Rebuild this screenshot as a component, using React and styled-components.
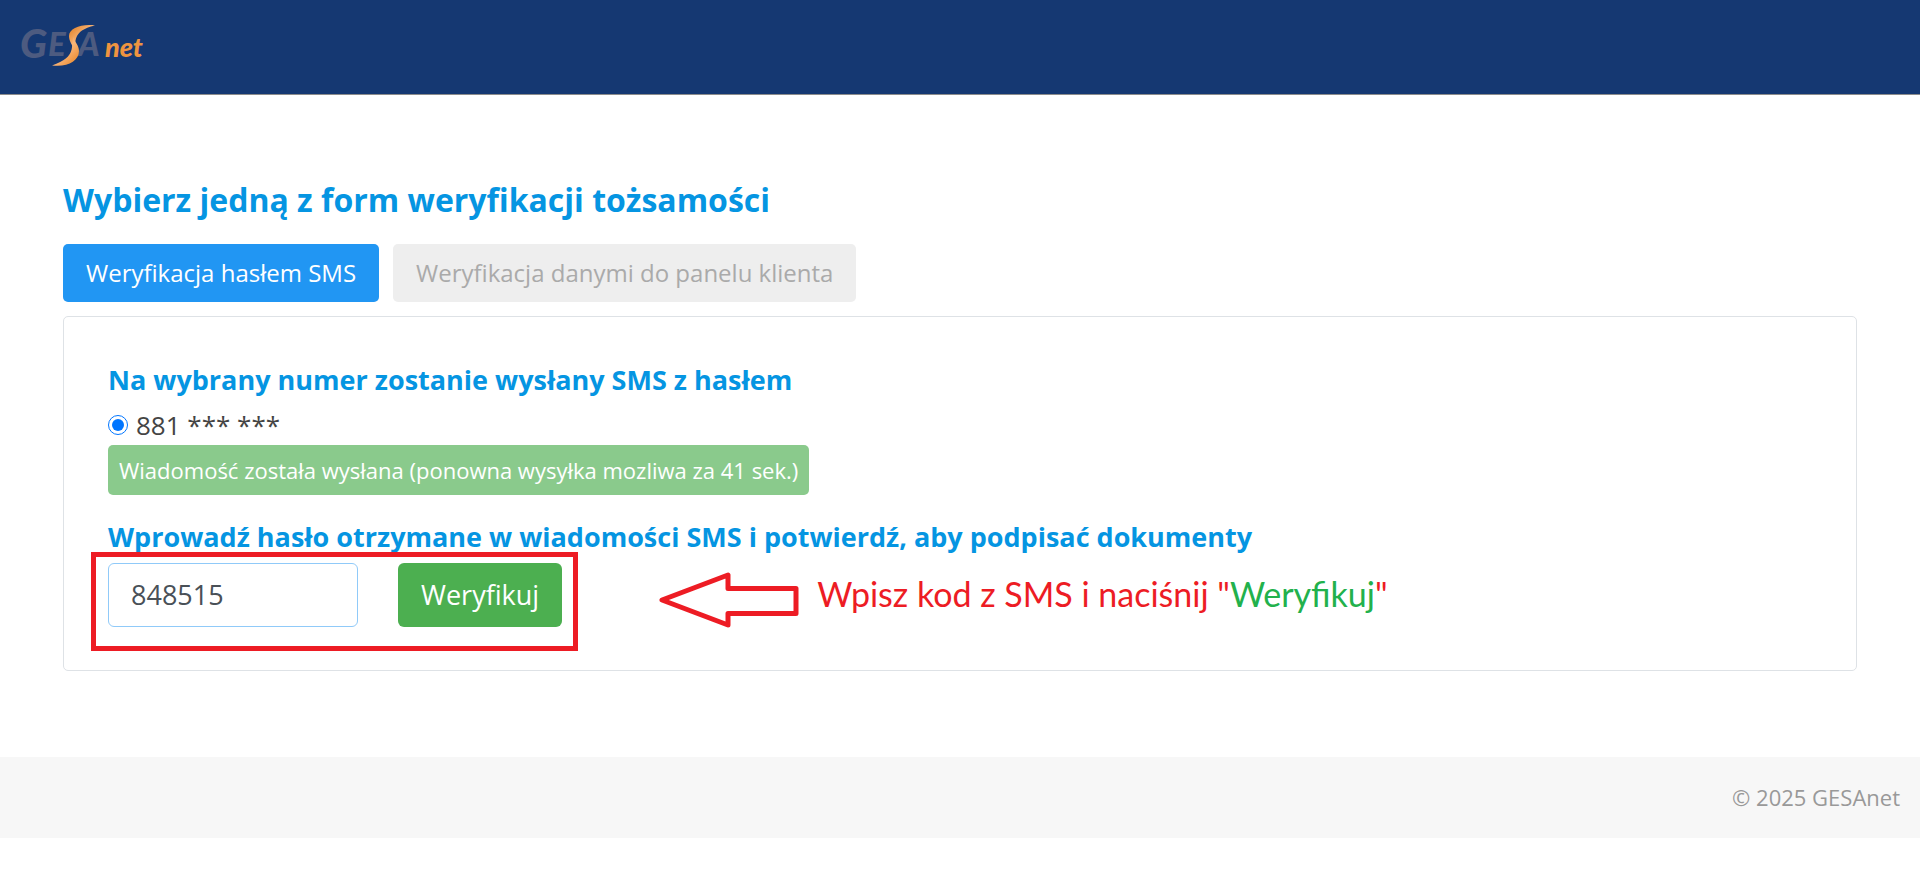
import React, { useState } from "react";
import styled, { createGlobalStyle } from "styled-components";

const GlobalStyle = createGlobalStyle`
    * {
        box-sizing: border-box;
    }
    body {
        margin: 0;
        background: #fff;
        color: #444;
        font-family: "Open Sans", "Noto Sans", sans-serif;
    }
    button, input {
        font-family: inherit;
    }
`
const Header = styled.header`
    display: flex;
    padding: 12px 16px;
    background: #153872;
    border-bottom: 1px solid #8c8c8c;
`
const LogoLink = styled.a`
    display: flex;
`
const Main = styled.main`
    padding: 81px 63px 86px;
`
const Title = styled.h1`
    margin: 0 0 20px;
    font-size: 32px;
    line-height: 48px;
    font-weight: 700;
    color: #0595e2;
`
const Tabs = styled.div`
    display: flex;
    gap: 14px;
    margin-bottom: 14px;
`
const Tab = styled.button`
    padding: 12px 23px;
    border: 0;
    border-radius: 5px;
    font-size: 24px;
    line-height: 34px;
    cursor: pointer;
    background: ${(props) => (props.$active ? "#2196f3" : "#eee")};
    color: ${(props) => (props.$active ? "#fff" : "#aaa")};
`
const Panel = styled.section`
    padding: 43px 44px;
    border: 1px solid #dee2e6;
    border-radius: 5px;
`
const SubTitle = styled.h2`
    margin: 0;
    font-size: 27px;
    line-height: 40px;
    font-weight: 700;
    color: #0595e2;
`
const PhoneOption = styled.label`
    display: flex;
    align-items: center;
    gap: 8px;
    margin-top: 5px;
    font-size: 26px;
    line-height: 40px;
    input {
        width: 20px;
        height: 20px;
        margin: 0;
        accent-color: #0075ff;
    }
`
const SentButton = styled.button`
    display: block;
    margin-bottom: 22px;
    padding: 8px 11px;
    border: 0;
    border-radius: 5px;
    font-size: 22px;
    line-height: 34px;
    background: #4caf50;
    color: #fff;
    opacity: 0.65;
`
const CodeRow = styled.form`
    display: flex;
    align-items: center;
    gap: 97px;
    margin-top: 6px;
`
const CodeFields = styled.div`
    position: relative;
    display: flex;
    gap: 40px;
`
const CodeInput = styled.input`
    width: 250px;
    height: 64px;
    padding: 0 22px 2px;
    border: 1px solid #90caf9;
    border-radius: 6px;
    font-size: 27px;
    color: #495057;
    outline: none;
`
const VerifyButton = styled.button`
    height: 64px;
    padding: 0 23px 2px;
    border: 0;
    border-radius: 6px;
    font-size: 27px;
    background: #4caf50;
    color: #fff;
    cursor: pointer;
`
const Highlight = styled.div`
    position: absolute;
    top: -11px;
    right: -16px;
    bottom: -24px;
    left: -17px;
    border: 5px solid #ed1c24;
    pointer-events: none;
`
const Hint = styled.div`
    display: flex;
    align-items: center;
    gap: 18px;
    height: 64px;
`
const HintText = styled.p`
    margin: 0;
    padding-bottom: 2px;
    font-family: Lato, "Open Sans", sans-serif;
    font-size: 34px;
    line-height: 40px;
    color: #ed1c24;
    span {
        color: #22b14c;
    }
`
const Footer = styled.footer`
    padding: 24px 20px;
    background: #f7f7f7;
    font-size: 22px;
    line-height: 33px;
    text-align: right;
    color: #999;
`

const Logo = () => (
    <svg width="134" height="70" viewBox="16 12 134 70" role="img" aria-label="GESAnet">
        <defs>
            <linearGradient id="blade" x1="0" x2="1" y1="0" y2="1">
                <stop offset="0" stopColor="#e07b1c" />
                <stop offset="0.5" stopColor="#f9b67a" />
                <stop offset="1" stopColor="#e8801c" />
            </linearGradient>
        </defs>
        <g fill="#4d5b80" fontFamily="Lato" fontStyle="italic" fontWeight="900">
            <text x="20" y="58" fontSize="40">G</text>
            <text x="48" y="56" fontSize="33">E</text>
            <text x="78" y="56" fontSize="33">A</text>
        </g>
        <text x="105" y="57" fontSize="27" fontFamily="Lato" fontStyle="italic" fontWeight="900" fill="#ee9440">net</text>
        <path d="M95 25.4 C82 23.5 69 28 69 36 C69 42 73 45 74 50 C77 42 71 31 95 25.4 Z" fill="url(#blade)" />
        <path d="M52 65.4 C67 67.5 79 61 79 51 C79 45 75 43 73.600 37 C70 45 78 57 52 65.4 Z" fill="url(#blade)" />
    </svg>
)

const Arrow = () => (
    <svg width="140" height="68" viewBox="0 0 140 68" aria-hidden="true">
        <path
            d="M3 39 L69 14 V27.500 H137 V52.500 H69 V64 Z"
            fill="none"
            stroke="#ed1c24"
            strokeWidth="5"
            strokeLinejoin="round"
        />
    </svg>
)

const tabs = [
    { id: "sms", label: "Weryfikacja hasłem SMS" },
    { id: "panel", label: "Weryfikacja danymi do panelu klienta" },
]

const App = () => {
    const [active, setActive] = useState("sms")
    const [code, setCode] = useState("848515")

    return (
        <>
            <GlobalStyle />
            <Header>
                <LogoLink href="#"><Logo /></LogoLink>
            </Header>
            <Main>
                <Title>Wybierz jedną z form weryfikacji tożsamości</Title>
                <Tabs>
                    {tabs.map((tab) => (
                        <Tab key={tab.id} type="button" $active={active === tab.id} onClick={() => setActive(tab.id)}>
                            {tab.label}
                        </Tab>
                    ))}
                </Tabs>
                <Panel>
                    <SubTitle>Na wybrany numer zostanie wysłany SMS z hasłem</SubTitle>
                    <PhoneOption>
                        <input type="radio" name="phone" defaultChecked />
                        881 *** ***
                    </PhoneOption>
                    <SentButton type="button" disabled>
                        Wiadomość została wysłana (ponowna wysyłka mozliwa za 41 sek.)
                    </SentButton>
                    <SubTitle as="label" htmlFor="code">
                        Wprowadź hasło otrzymane w wiadomości SMS i potwierdź, aby podpisać dokumenty
                    </SubTitle>
                    <CodeRow onSubmit={(e) => e.preventDefault()}>
                        <CodeFields>
                            <CodeInput id="code" type="text" value={code} onChange={(e) => setCode(e.target.value)} />
                            <VerifyButton type="submit">Weryfikuj</VerifyButton>
                            <Highlight />
                        </CodeFields>
                        <Hint>
                            <Arrow />
                            <HintText>Wpisz kod z SMS i naciśnij "<span>Weryfikuj</span>"</HintText>
                        </Hint>
                    </CodeRow>
                </Panel>
            </Main>
            <Footer>© 2025 GESAnet</Footer>
        </>
    )
}

export default App
